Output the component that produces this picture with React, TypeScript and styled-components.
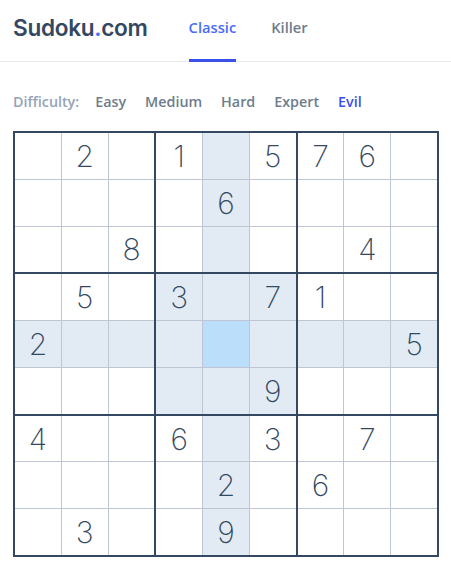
import React from 'react'
import styled, { createGlobalStyle } from 'styled-components'

const GlobalStyle = createGlobalStyle`
  body {
    margin: 0;
    background: #fff;
    font-family: 'Open Sans', 'Liberation Sans', sans-serif;
  }
`

const Page = styled.div`
  width: 451px;
`

const Header = styled.header`
  display: flex;
  align-items: stretch;
  height: 61px;
  padding: 0 13px;
  border-bottom: 1px solid #e6e9f2;
`

const Logo = styled.div`
  display: flex;
  align-items: center;
  padding-bottom: 6px;
  font-family: 'Inter', 'Liberation Sans', sans-serif;
  font-weight: 600;
  font-size: 22.6px;
  letter-spacing: -0.3px;
  color: #344861;
  margin-right: 41px;
  span {
    color: #4a6cf7;
  }
`

const Tabs = styled.nav`
  display: flex;
  gap: 35px;
`

const Tab = styled.div<{ $active?: boolean }>`
  display: flex;
  align-items: center;
  padding-bottom: 6px;
  font-size: 14.7px;
  font-weight: 600;
  color: ${p => (p.$active ? '#4a6cf7' : '#6e7c8c')};
  border-bottom: 3px solid ${p => (p.$active ? '#3b50e8' : 'transparent')};
  margin-bottom: -1px;
`

const Levels = styled.div`
  display: flex;
  align-items: center;
  gap: 19px;
  padding: 28px 13px 0;
  height: 22px;
  font-size: 14.3px;
  font-weight: 600;
`

const LevelLabel = styled.span`
  color: #94a3b8;
  margin-right: -3px;
`

const Level = styled.span<{ $active?: boolean }>`
  color: ${p => (p.$active ? '#3b50e8' : '#6e7c8c')};
`

const Board = styled.div`
  margin: 19px 0 0 13px;
  width: 426px;
  height: 426px;
  box-sizing: border-box;
  border: 2px solid #344861;
  background: #344861;
  display: grid;
  grid-template-columns: repeat(3, 1fr);
  grid-template-rows: repeat(3, 1fr);
  gap: 2px;
`

const Box = styled.div`
  display: grid;
  grid-template-columns: repeat(3, 1fr);
  grid-template-rows: repeat(3, 1fr);
  gap: 1px;
  background: #bec6d4;
`

const Cell = styled.div<{ $tone: 'plain' | 'hl' | 'sel' }>`
  display: flex;
  align-items: center;
  justify-content: center;
  background: ${p => (p.$tone === 'sel' ? '#bbdefb' : p.$tone === 'hl' ? '#e2ebf3' : '#fff')};
  font-family: 'Inter', 'Liberation Sans', sans-serif;
  font-weight: 250;
  font-size: 30px;
  color: #344861;
`

const puzzle = [
  '.2.1.576.',
  '....6....',
  '..8....4.',
  '.5.3.71..',
  '2.......5',
  '.....9...',
  '4..6.3.7.',
  '....2.6..',
  '.3..9....',
]

const selRow = 4
const selCol = 4

const tone = (r: number, c: number): 'plain' | 'hl' | 'sel' => {
  if (r === selRow && c === selCol) return 'sel'
  const sameBox = Math.floor(r / 3) === Math.floor(selRow / 3) && Math.floor(c / 3) === Math.floor(selCol / 3)
  if (r === selRow || c === selCol || sameBox) return 'hl'
  return 'plain'
}

const App = () => {
  const boxes = [0, 1, 2, 3, 4, 5, 6, 7, 8]
  return (
    <Page>
      <GlobalStyle />
      <Header>
        <Logo>
          Sudoku<span>.</span>com
        </Logo>
        <Tabs>
          <Tab $active>Classic</Tab>
          <Tab>Killer</Tab>
        </Tabs>
      </Header>
      <Levels>
        <LevelLabel>Difficulty:</LevelLabel>
        <Level>Easy</Level>
        <Level>Medium</Level>
        <Level>Hard</Level>
        <Level>Expert</Level>
        <Level $active>Evil</Level>
      </Levels>
      <Board>
        {boxes.map(b => (
          <Box key={b}>
            {boxes.map(i => {
              const r = Math.floor(b / 3) * 3 + Math.floor(i / 3)
              const c = (b % 3) * 3 + (i % 3)
              const v = puzzle[r][c]
              return (
                <Cell key={i} $tone={tone(r, c)}>
                  {v === '.' ? '' : v}
                </Cell>
              )
            })}
          </Box>
        ))}
      </Board>
    </Page>
  )
}

export default App
